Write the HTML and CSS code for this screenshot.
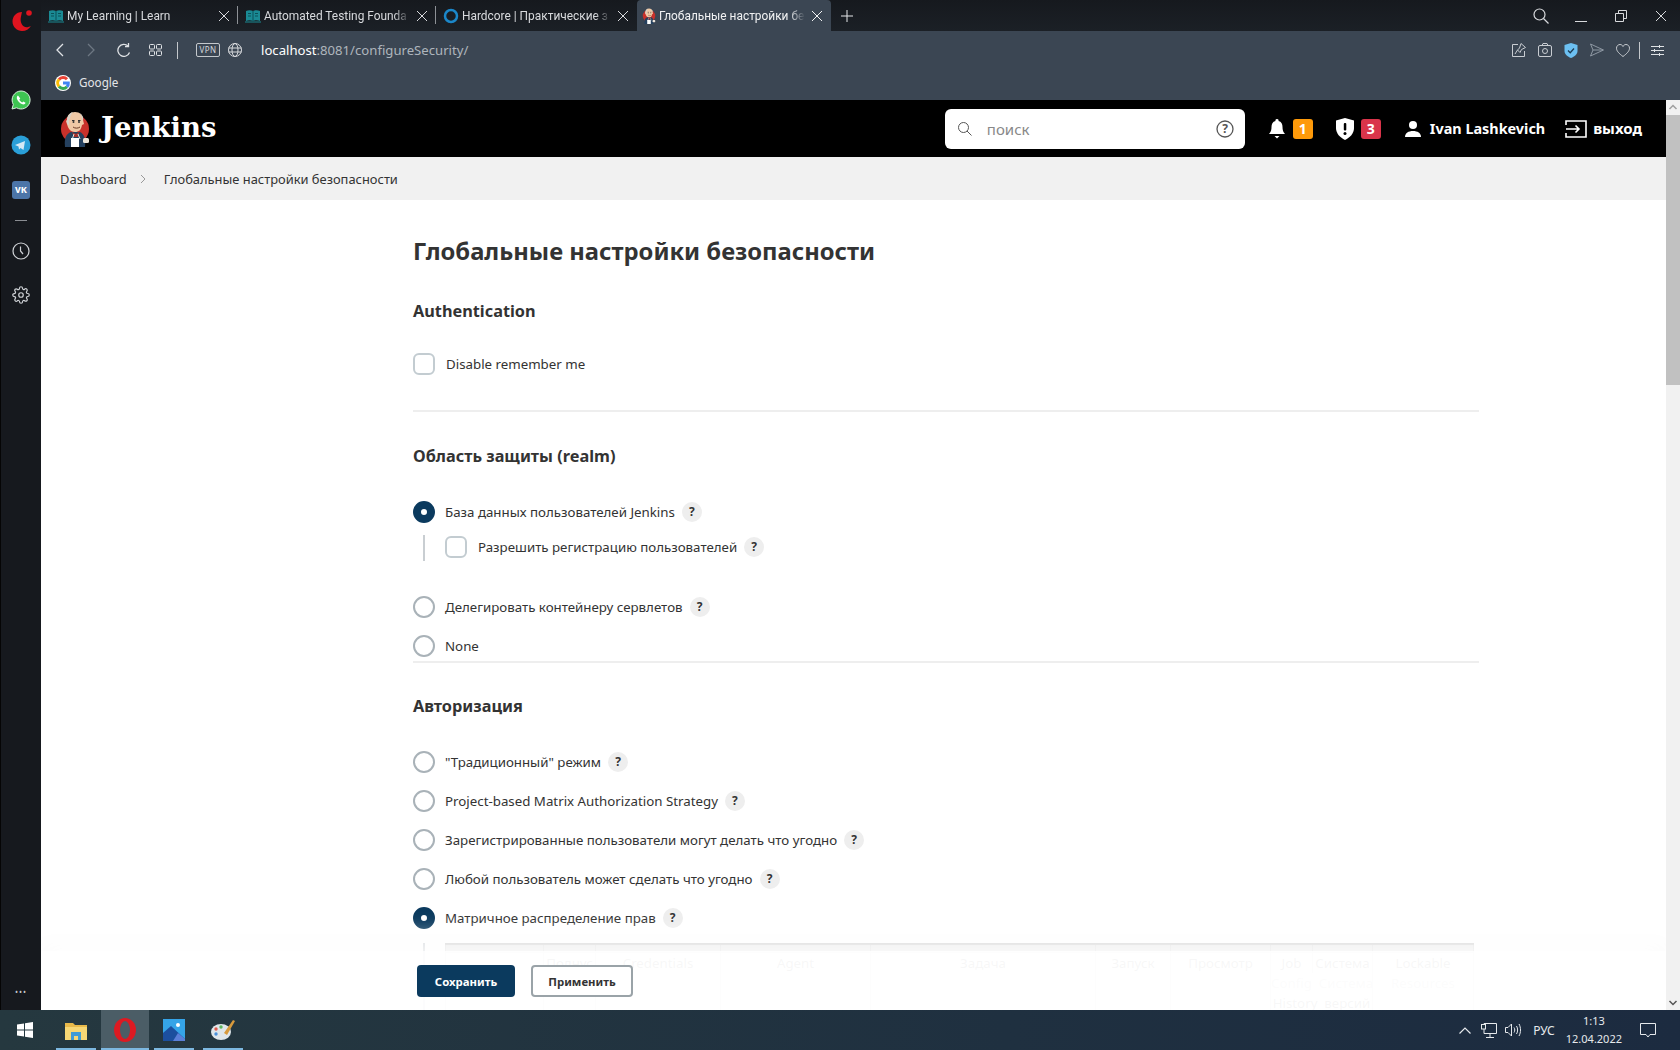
FILE: index.html
```html
<!DOCTYPE html>
<html lang="en">
<head>
  <meta charset="UTF-8" />
  <title>Глобальные настройки безопасности</title>
  <link rel="stylesheet" href="styles.css">
</head>
<body>
  <svg class="defs" width="0" height="0">
    <symbol id="butler" viewBox="0 0 30 36">
      <circle cx="15" cy="18" r="14" fill="#c8312b"/>
      <path d="M5 36c-1-9 1-13 6-15l9 0c4 2 6 6 5 15z" fill="#25415f"/>
      <path d="M12 21l4 2 3-2-1 5-4 0z" fill="#a5302c"/>
      <path d="M14 23l-2 6M18 23l2 5" stroke="#e8e4dc" fill="none"/>
      <path d="M7 9c0-5 3-8 8-8s8 3 8 8l1 4-2 1c-1 5-3 7-7 7-5 0-7-4-8-8l-1-3z" fill="#f0c9a6"/>
      <path d="M7 13c-1-6 2-11 6-12-2 2-3 4-3 7l-1 1 0 5z" fill="#d9d4cc"/>
      <path d="M22 8c0-3-1-5-3-6 3 1 5 4 4 8z" fill="#d9d4cc"/>
      <path d="M13 16c2 1.500 5 1.500 7 0" stroke="#6b3a25" fill="none"/>
      <path d="M12 9.500h2.500M18 9.500h2.500" stroke="#333"/>
      <circle cx="13.500" cy="11" r="1" fill="#333"/><circle cx="19" cy="11" r="1" fill="#333"/>
      <rect x="11" y="27" width="8" height="9" fill="#fff"/>
      <rect x="23" y="27" width="6" height="5" rx="1.500" fill="#efe6da"/>
    </symbol>
    <symbol id="book" viewBox="0 0 16 14">
      <path d="M1 2c2-1 5-1 7 0 2-1 5-1 7 0v10c-2-1-5-1-7 0-2-1-5-1-7 0z" fill="#1a8a94"/>
      <path d="M8 2v10M3 4.500h3M3 7h3M10 4.500h3M10 7h3" stroke="#0b5058"/>
      <path d="M0 13h16" stroke="#1a8a94"/>
    </symbol>
    <symbol id="close" viewBox="0 0 12 12">
      <path d="M1 1l10 10M11 1L1 11" stroke="currentColor" fill="none"/>
    </symbol>
  </svg>

  <aside class="sidebar">
    <svg class="opera" width="24" height="24" viewBox="0 0 24 24">
      <path d="M13 4C7 4 3.500 8.500 3.500 13.500 3.500 19 8 23 13 23c4 0 7-2 9-5-2 1-5 2-7 .5-3-2-4-6-3-10 .3-1.800.8-3.200 1-4.500z" fill="#e0141f"/>
      <circle cx="20" cy="5" r="2.800" fill="#e0141f"/>
    </svg>
    <svg class="side-whatsapp" width="20" height="20" viewBox="0 0 20 20">
      <path d="M10 1a9 9 0 0 0-7.700 13.500L1 19l4.600-1.200A9 9 0 1 0 10 1z" fill="#3ec552" stroke="#d9f2dd" stroke-width="1"/>
      <path d="M7 5.500c-1 .5-1.500 2-1 3.500 1 2.500 3 4.500 5.500 5.300 1.500.4 2.800-.3 3-1.500l-2.200-1.300-1 1c-1.300-.5-2.500-1.700-3-3l1-1z" fill="#fff"/>
    </svg>
    <svg class="side-telegram" width="20" height="20" viewBox="0 0 20 20">
      <circle cx="10" cy="10" r="9.500" fill="#2a9fd8"/>
      <path d="M4 10l10-4-1.500 9-3-2-1.500 1.500-.5-3z" fill="#d5e9f5"/>
    </svg>
    <span class="side-vk">vк</span>
    <span class="side-dash"></span>
    <svg class="side-clock" width="18" height="18" viewBox="0 0 18 18" fill="none" stroke="#cfd2d6" stroke-width="1.200">
      <circle cx="9" cy="9" r="8"/><path d="M8.500 4.500v4.500l2.500 3"/>
    </svg>
    <svg class="side-gear" width="18" height="18" viewBox="0 0 24 24" fill="none" stroke="#cfd2d6" stroke-width="1.600">
      <circle cx="12" cy="12" r="3"/>
      <path d="M19.400 15a1.650 1.650 0 0 0 .33 1.820l.06.06a2 2 0 0 1 0 2.830 2 2 0 0 1-2.830 0l-.06-.06a1.650 1.650 0 0 0-1.820-.33 1.650 1.650 0 0 0-1 1.510V21a2 2 0 0 1-2 2 2 2 0 0 1-2-2v-.09A1.650 1.650 0 0 0 9 19.400a1.650 1.650 0 0 0-1.820.33l-.06.06a2 2 0 0 1-2.830 0 2 2 0 0 1 0-2.830l.06-.06a1.650 1.650 0 0 0 .33-1.820 1.650 1.650 0 0 0-1.510-1H3a2 2 0 0 1-2-2 2 2 0 0 1 2-2h.09A1.650 1.650 0 0 0 4.600 9a1.650 1.650 0 0 0-.33-1.820l-.06-.06a2 2 0 0 1 0-2.830 2 2 0 0 1 2.830 0l.06.06a1.650 1.650 0 0 0 1.820.33H9a1.650 1.650 0 0 0 1-1.510V3a2 2 0 0 1 2-2 2 2 0 0 1 2 2v.09a1.650 1.650 0 0 0 1 1.510 1.650 1.650 0 0 0 1.820-.33l.06-.06a2 2 0 0 1 2.830 0 2 2 0 0 1 0 2.830l-.06.06a1.650 1.650 0 0 0-.33 1.820V9a1.650 1.650 0 0 0 1.510 1H21a2 2 0 0 1 2 2 2 2 0 0 1-2 2h-.09a1.650 1.650 0 0 0-1.510 1z"/>
    </svg>
    <span class="side-dots">•••</span>
  </aside>

  <div class="browser">
    <div class="tabbar">
      <div class="tab tab-a">
        <svg class="favicon" width="16" height="14"><use href="#book"/></svg>
        <span class="tab-title">My Learning | Learn</span>
        <svg class="tab-x" width="12" height="12"><use href="#close"/></svg>
      </div>
      <div class="tab tab-b">
        <svg class="favicon" width="16" height="14"><use href="#book"/></svg>
        <span class="tab-title">Automated Testing Founda</span>
        <svg class="tab-x" width="12" height="12"><use href="#close"/></svg>
      </div>
      <div class="tab tab-c">
        <svg class="favicon" width="16" height="16" viewBox="0 0 16 16"><circle cx="8" cy="8" r="6" fill="none" stroke="#1b87c9" stroke-width="2.500"/></svg>
        <span class="tab-title">Hardcore | Практические з</span>
        <svg class="tab-x" width="12" height="12"><use href="#close"/></svg>
      </div>
      <div class="tab tab-active">
        <svg class="favicon" width="14" height="16"><use href="#butler"/></svg>
        <span class="tab-title">Глобальные настройки бе</span>
        <svg class="tab-x" width="12" height="12"><use href="#close"/></svg>
      </div>
      <svg class="tab-plus" width="12" height="12" viewBox="0 0 12 12"><path d="M6 0v12M0 6h12" stroke="#e6e8ea"/></svg>
      <div class="window-btns">
        <svg width="16" height="16" viewBox="0 0 16 16" fill="none" stroke="#d8dadd" stroke-width="1.200"><circle cx="6.500" cy="6.500" r="5.500"/><path d="M10.500 10.500l5 5"/></svg>
        <svg class="win-min" width="12" height="12" viewBox="0 0 12 12"><path d="M0 11.500h12" stroke="#d8dadd"/></svg>
        <svg class="win-max" width="12" height="12" viewBox="0 0 12 12" fill="none" stroke="#d8dadd"><path d="M.5 3.500h8v8h-8zM3.500 3.500v-3h8v8h-3"/></svg>
        <svg class="win-close" width="12" height="12"><use href="#close"/></svg>
      </div>
    </div>

    <div class="toolbar">
      <svg class="nav-icon" width="9" height="14" viewBox="0 0 9 14" fill="none" stroke="#e0e3e6" stroke-width="1.300"><path d="M8 1L2 7l6 6"/></svg>
      <svg class="nav-icon nav-forward" width="9" height="14" viewBox="0 0 9 14" fill="none" stroke="#6d7783" stroke-width="1.300"><path d="M1 1l6 6-6 6"/></svg>
      <svg class="nav-icon nav-reload" width="14" height="14" viewBox="0 0 14 14" fill="none" stroke="#e0e3e6" stroke-width="1.300"><path d="M12.500 9.500A6 6 0 1 1 11 3"/><path d="M11.500 0v3.500H8"/></svg>
      <svg class="nav-icon nav-grid" width="13" height="12" viewBox="0 0 13 12" fill="none" stroke="#e0e3e6"><rect x=".5" y=".5" width="5" height="4.500" rx="1"/><rect x="7.500" y=".5" width="5" height="4.500" rx="1"/><rect x=".5" y="7" width="5" height="4.500" rx="1"/><rect x="7.500" y="7" width="5" height="4.500" rx="1"/></svg>
      <span class="nav-sep"></span>
      <span class="vpn">VPN</span>
      <svg class="nav-globe" width="14" height="14" viewBox="0 0 14 14" fill="none" stroke="#d8dadd"><circle cx="7" cy="7" r="6.500"/><ellipse cx="7" cy="7" rx="3" ry="6.500"/><path d="M.5 5h13M.5 9h13"/></svg>
      <span class="url"><b>localhost</b>:8081/configureSecurity/</span>
      <div class="tool-right">
        <svg width="14" height="14" viewBox="0 0 14 14" fill="none" stroke="#c9cdd2"><path d="M6 1.500H.5v12h12V8"/><path d="M9 .5l4.500 4-4 2-1.500 3-2.500-2.500L7.500 5z"/><path d="M5.500 7L3 11"/></svg>
        <svg width="14" height="14" viewBox="0 0 14 14" fill="none" stroke="#c9cdd2"><rect x=".5" y="2.500" width="13" height="11" rx="1.500"/><path d="M4 2.500L5 .5h4l1 2"/><circle cx="7" cy="8" r="2.500"/></svg>
        <svg width="14" height="15" viewBox="0 0 14 15"><path d="M7 0l6.500 2v6c0 3.500-3 5.500-6.500 7C3.500 13.500.5 11.500.5 8V2z" fill="#6cc0f2"/><path d="M4 7.500l2.200 2.200L10 5.500" fill="none" stroke="#1d3c55" stroke-width="1.300"/></svg>
        <svg width="14" height="14" viewBox="0 0 14 14" fill="none" stroke="#8e98a3"><path d="M.5 1l13 6-13 6 2.500-6zM3 7h10"/></svg>
        <svg class="tool-heart" width="14" height="13" viewBox="0 0 14 13" fill="none" stroke="#c9cdd2"><path d="M7 12.500C3 9.500.5 7 .5 4.200 .5 2 2.200.5 4 .5c1.300 0 2.400.7 3 2 .6-1.300 1.700-2 3-2 1.800 0 3.500 1.500 3.500 3.700C13.500 7 11 9.500 7 12.500z"/></svg>
        <span class="nav-sep tool-sep"></span>
        <svg width="13" height="11" viewBox="0 0 13 11" stroke="#dfe2e5"><path d="M0 1.500h13M0 5.500h13M0 9.500h13M8.500 0v3M3.500 4v3M8.500 8v3"/></svg>
      </div>
    </div>

    <div class="bookmarks">
      <svg width="16" height="16" viewBox="0 0 16 16" class="google" fill="none" stroke-width="3">
        <circle cx="8" cy="8" r="8" fill="#fff" stroke="none"/>
        <path d="M12 4.300A5.300 5.300 0 0 0 4 4.500" stroke="#ea4335"/>
        <path d="M4 4.500a5.300 5.300 0 0 0 0 7" stroke="#fbbc05"/>
        <path d="M4 11.500a5.300 5.300 0 0 0 8 .2" stroke="#34a853"/>
        <path d="M12 11.700c1-1 1.400-2.300 1.300-3.700H8" stroke="#4285f4"/>
      </svg>
      <span>Google</span>
    </div>

    <div class="viewport">
      <div class="page">
        <header class="jenkins-head">
          <svg class="logo" width="30" height="36"><use href="#butler"/></svg>
          <span class="brand">Jenkins</span>
          <div class="search">
            <svg width="14" height="14" viewBox="0 0 14 14" fill="none" stroke="#555"><circle cx="5.500" cy="5.500" r="5"/><path d="M9 9l4.500 4.500"/></svg>
            <span class="search-ph">поиск</span>
            <svg class="search-help" width="18" height="18" viewBox="0 0 18 18"><circle cx="9" cy="9" r="8" fill="none" stroke="#555" stroke-width="1.300"/><text x="9" y="13" text-anchor="middle" class="search-q">?</text></svg>
          </div>
          <svg class="head-bell" width="16" height="20" viewBox="0 0 16 20" fill="#fff"><path d="M8 0a1.500 1.500 0 0 1 1.500 2C12.500 2.800 13.500 5 13.500 8c0 3 .7 5 2.500 7H0c1.800-2 2.500-4 2.500-7 0-3 1-5.200 4-6A1.500 1.500 0 0 1 8 0z"/><path d="M5.500 17h5L8 19.500z"/></svg>
          <span class="badge badge-warn">1</span>
          <svg class="head-shield" width="18" height="22" viewBox="0 0 18 22"><path d="M9 0l9 2.500V10c0 5.500-4 9.500-9 12-5-2.500-9-6.500-9-12V2.500z" fill="#fff"/><rect x="7.800" y="5" width="2.500" height="7.500" rx="1" fill="#000"/><circle cx="9" cy="15.500" r="1.500" fill="#000"/></svg>
          <span class="badge badge-danger">3</span>
          <svg class="head-user" width="16" height="16" viewBox="0 0 16 16" fill="#fff"><circle cx="8" cy="4" r="4"/><path d="M0 16c0-4 3.500-6 8-6s8 2 8 6z"/></svg>
          <span class="head-name">Ivan Lashkevich</span>
          <svg class="head-exit" width="22" height="18" viewBox="0 0 22 18" fill="none" stroke="#fff" stroke-width="1.600"><path d="M1 5V1h20v16H1v-4"/><path d="M1 9h13M10.500 5.500L14 9l-3.500 3.500"/></svg>
          <span class="head-logout">выход</span>
        </header>

        <nav class="crumbs">
          <span>Dashboard</span>
          <svg width="6" height="10" viewBox="0 0 6 10" fill="none" stroke="#999"><path d="M1 1l4 4-4 4"/></svg>
          <span>Глобальные настройки безопасности</span>
        </nav>

        <main class="form">
          <h1>Глобальные настройки безопасности</h1>

          <h2 class="h-auth">Authentication</h2>
          <label class="check-row"><span class="box"></span>Disable remember me</label>
          <hr class="rule rule-first">

          <h2 class="h-realm">Область защиты (realm)</h2>
          <div class="radio-row row-jenkins"><span class="radio on"></span>База данных пользователей Jenkins<span class="help">?</span></div>
          <div class="sub">
            <label class="check-row"><span class="box"></span>Разрешить регистрацию пользователей<span class="help">?</span></label>
          </div>
          <div class="radio-row row-delegate"><span class="radio"></span>Делегировать контейнеру сервлетов<span class="help">?</span></div>
          <div class="radio-row row-none"><span class="radio"></span>None</div>
          <hr class="rule rule-second">

          <h2 class="h-authz">Авторизация</h2>
          <div class="radio-list">
            <div class="radio-row"><span class="radio"></span>"Традиционный" режим<span class="help">?</span></div>
            <div class="radio-row"><span class="radio"></span>Project-based Matrix Authorization Strategy<span class="help">?</span></div>
            <div class="radio-row"><span class="radio"></span>Зарегистрированные пользователи могут делать что угодно<span class="help">?</span></div>
            <div class="radio-row"><span class="radio"></span>Любой пользователь может сделать что угодно<span class="help">?</span></div>
            <div class="radio-row"><span class="radio on"></span>Матричное распределение прав<span class="help">?</span></div>
          </div>
          <div class="sub sub-matrix">
            <table class="matrix">
              <tr class="matrix-top">
                <td class="c1"></td><td class="c2"></td><td class="c3"></td><td class="c4"></td><td class="c5"></td>
                <td class="c6"></td><td class="c7"></td><td class="c8"></td><td class="c9"></td><td class="c10"></td>
              </tr>
              <tr class="matrix-head">
                <td></td><td>Полнус</td><td>Credentials</td><td>Agent</td><td>Задача</td>
                <td>Запуск</td><td>Просмотр</td><td>Job</td><td>Система</td><td>Lockable</td>
              </tr>
              <tr class="matrix-head matrix-faint">
                <td></td><td></td><td></td><td></td><td></td><td></td><td></td>
                <td colspan="2">Config&nbsp; Система</td><td>Resources</td>
              </tr>
              <tr class="matrix-head">
                <td></td><td></td><td></td><td></td><td></td><td></td><td></td>
                <td colspan="2">History&nbsp; версий</td><td></td>
              </tr>
            </table>
          </div>
        </main>

        <div class="savebar">
          <button class="btn btn-save">Сохранить</button>
          <button class="btn btn-apply">Применить</button>
        </div>
      </div>

      <div class="scrollbar">
        <svg width="14" height="15" viewBox="0 0 14 15" fill="none" stroke="#a0a0a0" stroke-width="1.500"><path d="M3.500 9L7 5.500 10.500 9"/></svg>
        <div class="thumb"></div>
        <div class="track"></div>
        <svg width="14" height="15" viewBox="0 0 14 15" fill="none" stroke="#555" stroke-width="1.500"><path d="M3.500 6L7 9.500 10.500 6"/></svg>
      </div>
    </div>
  </div>

  <footer class="taskbar">
    <svg class="start" width="16" height="16" viewBox="0 0 16 16" fill="#fff"><path d="M0 2.500l7-1v6H0zM8 1.300L16 0v7.500H8zM0 8.500h7v6l-7-1zM8 8.500h8V16l-8-1.200z"/></svg>
    <div class="task-app task-files">
      <svg width="22" height="19" viewBox="0 0 22 19"><path d="M0 2h8l2 2h12v15H0z" fill="#e8b94a"/><path d="M0 6h22v13H0z" fill="#f7d774"/><path d="M6 11h10v8h-3v-4H9v4H6z" fill="#3f9bd6"/></svg>
    </div>
    <div class="task-app task-opera">
      <svg width="24" height="26" viewBox="0 0 24 26"><ellipse cx="12" cy="13" rx="11" ry="12" fill="#dc1a22"/><ellipse cx="12" cy="13" rx="5" ry="9" fill="#4b5d66"/></svg>
    </div>
    <div class="task-app task-photos">
      <svg width="22" height="22" viewBox="0 0 22 22"><rect width="22" height="22" fill="#35a4e8"/><circle cx="15" cy="6" r="2" fill="#fff"/><path d="M0 22V14l8-7 14 13v2z" fill="#1c4f9e"/><path d="M10 22l5-8 7 6v2z" fill="#5b7fd8"/></svg>
    </div>
    <div class="task-app task-paint">
      <svg width="26" height="24" viewBox="0 0 26 24"><ellipse cx="11" cy="14" rx="10" ry="8" fill="#dfe6ea"/><circle cx="6" cy="11" r="1.700" fill="#e0594c"/><circle cx="11" cy="9" r="1.700" fill="#5db75d"/><circle cx="6" cy="16" r="1.700" fill="#4a90d9"/><path d="M14 15L23 2l2 1-8 14z" fill="#d89a3c"/></svg>
    </div>
    <div class="tray">
      <svg width="12" height="7" viewBox="0 0 12 7" fill="none" stroke="#e6e9ec" stroke-width="1.200"><path d="M.5 6.500L6 1l5.500 5.500"/></svg>
      <svg class="tray-net" width="16" height="15" viewBox="0 0 16 15" fill="none" stroke="#e6e9ec"><path d="M3 .5h12.500v10H3zM9 10.500v3.500M5 14.500h8"/><rect x=".5" y="1.500" width="4" height="4.500" fill="#1f3240"/></svg>
      <svg class="tray-sound" width="16" height="14" viewBox="0 0 16 14" fill="none" stroke="#e6e9ec"><path d="M.5 4.500h2.500L6.500 1v12L3 9.500H.5zM9 4.500c1 1.500 1 3.500 0 5M11.500 3c1.500 2.500 1.500 5.500 0 8M14 1c2 3.500 2 8.500 0 12"/></svg>
      <span class="tray-lang">РУС</span>
      <div class="tray-clock"><span>1:13</span><span>12.04.2022</span></div>
      <svg class="tray-note" width="16" height="15" viewBox="0 0 16 15" fill="none" stroke="#e6e9ec"><path d="M.5.500h15v11H10L8 14l-2-2.500H.5z"/></svg>
    </div>
  </footer>
</body>
</html>
```

FILE: styles.css
```css
* {
  box-sizing: border-box;
}
html, body {
  height: 100%;
}
body {
  margin: 0;
  height: 1050px;
  overflow: hidden;
  display: grid;
  grid-template-columns: 41px 1fr;
  grid-template-rows: 1010px 40px;
  font-family: 'Noto Sans', sans-serif;
  font-size: 13.300px;
  color: #333;
  background: #fff;
}
.defs {
  position: absolute;
}

/* opera side panel */
.sidebar {
  display: flex;
  flex-direction: column;
  align-items: center;
  background: #16191e;
  border-left: 1px solid #050505;
}
.opera {
  margin-top: 8px;
}
.side-whatsapp {
  margin-top: 58px;
}
.side-telegram {
  margin-top: 25px;
}
.side-vk {
  width: 18px;
  height: 18px;
  margin-top: 26px;
  border-radius: 3px;
  background: #4c75a8;
  color: #fff;
  font-size: 10px;
  font-weight: 700;
  line-height: 17px;
  text-align: center;
}
.side-dash {
  width: 12px;
  height: 1px;
  margin-top: 21px;
  background: #8a8d92;
}
.side-clock {
  margin-top: 21px;
}
.side-gear {
  margin-top: 26px;
}
.side-dots {
  margin-top: auto;
  margin-bottom: 13px;
  color: #c5c8cc;
  font-size: 8px;
  letter-spacing: 1px;
}

/* browser chrome */
.browser {
  display: flex;
  flex-direction: column;
  min-width: 0;
}
.tabbar {
  display: flex;
  align-items: stretch;
  height: 31px;
  flex: none;
  background: linear-gradient(#16191e, #1b2026);
  color: #d8dadd;
  font-family: Roboto, sans-serif;
  font-size: 11.900px;
}
.tab {
  display: flex;
  align-items: center;
  padding: 0 0 0 7px;
  position: relative;
}
.tab-a { width: 197px; }
.tab-b { width: 198px; }
.tab-c { width: 201px; }
.tab-a::after, .tab-b::after {
  content: "";
  position: absolute;
  right: 0;
  top: 6px;
  height: 18px;
  width: 1px;
  background: #8d9196;
}
.tab-active {
  width: 194px;
  padding-left: 5px;
  background: #3b4653;
  border-radius: 4px 4px 0 0;
  color: #f1f2f3;
}
.favicon {
  flex: none;
  margin-right: 3px;
}
.tab-title {
  flex: 1;
  min-width: 0;
  white-space: nowrap;
  -webkit-mask-image: linear-gradient(to left, transparent 0, #000 16px);
}
.tab-x {
  flex: none;
  margin: 0 8px 0 6px;
}
.tab-plus {
  align-self: center;
  margin-left: 10px;
}
.window-btns {
  margin-left: auto;
  display: flex;
  align-items: center;
  padding-right: 13px;
}
.win-min { margin-left: 26px; }
.win-max { margin-left: 28px; }
.win-close { margin-left: 28px; color: #d8dadd; }

.toolbar {
  display: flex;
  align-items: center;
  height: 38px;
  flex: none;
  padding-left: 14px;
  background: #3b4653;
  color: #fff;
}
.nav-forward { margin-left: 23px; }
.nav-reload { margin-left: 21px; }
.nav-grid { margin-left: 18px; }
.nav-sep {
  width: 1px;
  height: 17px;
  margin-left: 15px;
  background: #c4c8cc;
}
.vpn {
  margin-left: 18px;
  width: 24px;
  height: 14px;
  border: 1px solid #c4c8cc;
  border-radius: 2px;
  color: #d5d8db;
  font-size: 8px;
  line-height: 12px;
  letter-spacing: .5px;
  text-align: center;
}
.nav-globe { margin-left: 8px; }
.url {
  margin-left: 19px;
  font-size: 13.150px;
  color: #aeb5bc;
}
.url b {
  font-weight: 400;
  color: #fff;
}
.tool-right {
  margin-left: auto;
  display: flex;
  align-items: center;
  gap: 12px;
  padding-right: 16px;
}
.tool-sep {
  margin-left: -3px;
  margin-right: -1px;
}
.bookmarks {
  display: flex;
  align-items: center;
  height: 31px;
  flex: none;
  padding: 0 0 4px 14px;
  background: #3b4653;
  color: #e3e5e8;
  font-size: 11.700px;
}
.bookmarks span {
  margin-left: 8px;
  padding-bottom: 2px;
}

/* jenkins page */
.viewport {
  flex: 1;
  display: flex;
  min-height: 0;
}
.page {
  flex: 1;
  min-width: 0;
  position: relative;
  overflow: hidden;
  background: #fff;
}
.jenkins-head {
  display: flex;
  align-items: center;
  height: 57px;
  padding: 0 24px 0 19px;
  background: #000;
  color: #fff;
  font-weight: 700;
}
.brand {
  margin-left: 11px;
  padding-bottom: 3px;
  font-family: 'DejaVu Serif', serif;
  font-size: 27.500px;
}
.search {
  display: flex;
  align-items: center;
  width: 300px;
  height: 40px;
  margin-left: auto;
  padding: 0 11px 0 13px;
  border-radius: 6px;
  background: #fff;
}
.search-ph {
  margin-left: 15px;
  color: #888;
  font-size: 15px;
  font-weight: 400;
}
.search-help {
  margin-left: auto;
}
.search-q {
  font-size: 12px;
  font-weight: 700;
  fill: #555;
}
.head-bell { margin-left: 24px; }
.badge {
  width: 20px;
  height: 20px;
  margin-left: 8px;
  border-radius: 3px;
  font-size: 14px;
  line-height: 20px;
  text-align: center;
}
.badge-warn { background: #fe9a0a; }
.badge-danger { background: #d9344a; margin-left: 7px; }
.head-shield { margin-left: 23px; }
.head-user { margin-left: 24px; }
.head-name {
  margin-left: 9px;
  padding-bottom: 1px;
  font-size: 14.400px;
}
.head-exit { margin-left: 20px; }
.head-logout {
  margin-left: 6px;
  padding-bottom: 1px;
  font-size: 15px;
}
.crumbs {
  display: flex;
  align-items: center;
  height: 43px;
  padding-left: 19px;
  background: #f1f1f1;
  font-size: 12.900px;
}
.crumbs svg {
  margin: 0 18px 0 13px;
}

.form {
  padding: 34px 187px 0 372px;
}
h1 {
  margin: 0;
  font-size: 23.800px;
  line-height: 34px;
  font-weight: 700;
}
h2 {
  margin: 0;
  font-size: 16.300px;
  line-height: 24px;
  font-weight: 700;
}
.h-auth { margin-top: 31px; }
.h-realm { margin-top: 32px; }
.h-authz { margin-top: 31px; }
.rule {
  height: 2px;
  margin: 0;
  border: 0;
  background: #eee;
}
.rule-first { margin-top: 35px; }
.rule-second { margin-top: 3px; }
.check-row {
  display: flex;
  align-items: center;
  height: 22px;
  margin-top: 30px;
}
.box {
  flex: none;
  width: 22px;
  height: 22px;
  margin-right: 11px;
  border: 2px solid #c3ccd1;
  border-radius: 6px;
}
.radio-row {
  display: flex;
  align-items: center;
  height: 24px;
}
.radio {
  flex: none;
  width: 22px;
  height: 22px;
  margin-right: 10px;
  border: 2px solid #a9b2b8;
  border-radius: 50%;
}
.radio.on {
  border: 8px solid #0b3a5e;
  background: #fff;
}
.help {
  width: 20px;
  height: 20px;
  margin-left: 7px;
  border-radius: 50%;
  background: #eee;
  font-size: 12px;
  font-weight: 700;
  line-height: 20px;
  text-align: center;
}
.row-jenkins { margin-top: 32px; }
.row-delegate { margin-top: 34px; }
.row-none { margin-top: 15px; }
.sub {
  margin: 11px 0 0 10px;
  padding-left: 20px;
  border-left: 2px solid #c9ced2;
}
.sub .check-row {
  margin-top: 0;
  height: 26px;
  padding-bottom: 3px;
}
.radio-list {
  display: flex;
  flex-direction: column;
  gap: 15px;
  margin-top: 32px;
}
.sub-matrix {
  margin-top: 13px;
  padding-left: 20px;
  padding-right: 0;
  margin-right: 5px;
}
.matrix {
  width: 1029px;
  table-layout: fixed;
  border-collapse: collapse;
  font-size: 13.300px;
  text-align: center;
  color: #777;
}
.matrix td {
  padding: 0;
  border: 1px solid #d8d8d8;
  white-space: nowrap;
}
.matrix-top td {
  height: 8px;
  background: #e6e6e6;
  border-top: 2px solid #c8c8c8;
}
.matrix-head td {
  height: 20px;
  line-height: 20px;
  border-top: 0;
  border-bottom: 0;
}
.matrix-faint td {
  color: #c4c4c4;
}
.c1 { width: 98px; }
.c2 { width: 52px; }
.c3 { width: 125px; }
.c4 { width: 150px; }
.c5 { width: 225px; }
.c6 { width: 75px; }
.c7 { width: 100px; }
.c8 { width: 42px; }
.c9 { width: 60px; }
.savebar {
  position: absolute;
  left: 0;
  right: 0;
  bottom: 0;
  height: 59px;
  display: flex;
  gap: 16px;
  padding: 14px 0 0 376px;
  background: rgba(255, 255, 255, .94);
  box-shadow: 0 -14px 22px rgba(255, 255, 255, .8), 0 -6px 20px rgba(0, 0, 0, .03);
}
.btn {
  height: 32px;
  border-radius: 4px;
  font-family: inherit;
  font-size: 11.400px;
  font-weight: 700;
  padding: 0;
}
.btn-save {
  width: 98px;
  border: none;
  background: #0b3a5e;
  color: #fff;
}
.btn-apply {
  width: 102px;
  border: 2px solid #9aa3a8;
  background: #fff;
  color: #333;
}

.scrollbar {
  flex: none;
  width: 14px;
  display: flex;
  flex-direction: column;
  background: #f1f1f1;
}
.thumb {
  height: 270px;
  background: #c1c1c1;
}
.track {
  flex: 1;
}

/* windows taskbar */
.taskbar {
  grid-column: 1 / -1;
  display: flex;
  align-items: stretch;
  background: linear-gradient(to right, #25383f, #1f3040 60%, #1c2b40);
  color: #e6e9ec;
}
.start {
  align-self: center;
  margin: 0 15px 0 17px;
}
.task-app {
  position: relative;
  display: flex;
  align-items: center;
  justify-content: center;
}
.task-app::after {
  content: "";
  position: absolute;
  bottom: 0;
  left: 0;
  right: 0;
  height: 2px;
  background: #7db8e0;
}
.task-files { width: 40px; margin-left: 8px; }
.task-opera { width: 48px; margin-left: 5px; background: #4b5d66; }
.task-photos { width: 40px; margin-left: 5px; }
.task-paint { width: 40px; margin-left: 9px; }
.tray {
  margin-left: auto;
  display: flex;
  align-items: center;
  padding-right: 24px;
}
.tray-net { margin-left: 10px; }
.tray-sound { margin-left: 8px; }
.tray-lang {
  margin-left: 12px;
  font-size: 12px;
}
.tray-clock {
  display: flex;
  flex-direction: column;
  align-items: center;
  margin-left: 11px;
  font-size: 11px;
  line-height: 18px;
}
.tray-note {
  margin-left: 18px;
}
```
